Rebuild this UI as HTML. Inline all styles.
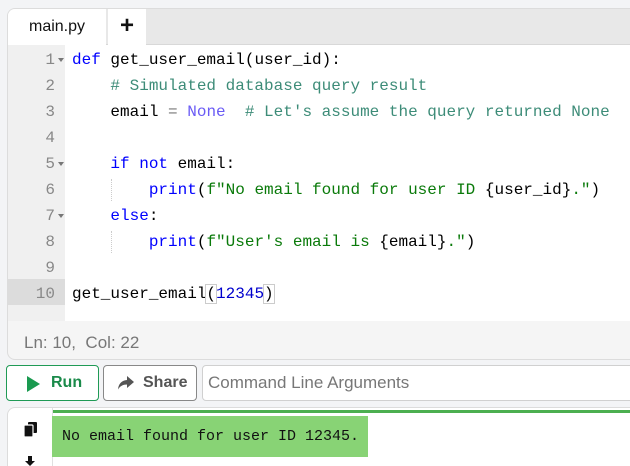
<!DOCTYPE html>
<html><head><meta charset="utf-8"><style>
*{margin:0;padding:0;box-sizing:border-box}
html,body{width:630px;height:466px;overflow:hidden}
body{background:#f3f4f6;font-family:"Liberation Sans",sans-serif;position:relative}
.panel{position:absolute;left:7px;top:8px;width:640px;height:352px;background:#f5f5f5;border:1px solid #dcdcdc;border-radius:8px;overflow:hidden}
.tabbar{position:absolute;left:0;top:0;right:0;height:36px;background:#e8e8e8;border-bottom:1px solid #d8d8d8}
.tab{position:absolute;top:0;height:36px;background:#fff;font-size:16px;color:#111;text-align:center;line-height:36px}
.editor{position:absolute;left:0;top:36px;right:0;height:276px;background:#fff}
.gutter{position:absolute;left:0;top:0;width:57px;height:276px;background:#f0f0f0}
.ln{position:absolute;left:0;width:47px;text-align:right;font:16px/26px "Liberation Mono",monospace;color:#888}
.fold{position:absolute;left:50px;width:0;height:0;border-left:3px solid transparent;border-right:3px solid transparent;border-top:4px solid #777}
.code{position:absolute;left:64px;font:16px/26px "Liberation Mono",monospace;color:#000;white-space:pre}
.k{color:#0000ff}.c{color:#3d8c78}.n{color:#6a5bf5}.s{color:#0a7a0a}.num{color:#0000cd}
.status{position:absolute;left:16px;top:324px;font-size:17px;color:#777}
.btn{position:absolute;top:365px;height:36px;border-radius:4px;background:#fff;font-weight:bold;font-size:16px;line-height:34px}
.out{position:absolute;left:7px;top:407px;width:640px;height:70px;background:#fff;border:1px solid #dcdcdc;border-radius:8px}
</style></head><body>
<div class="panel">
 <div class="tabbar">
  <div class="tab" style="left:0;width:98px">main.py</div>
  <div class="tab" style="left:100px;width:38px;font-size:24px;font-weight:bold;line-height:34px">+</div>
 </div>
 <div class="editor">
  <div class="gutter">
   <div style="position:absolute;left:0;top:234px;width:57px;height:26px;background:#dcdcdc"></div>
  </div>
  <div class="ln" style="top:2px">1</div><div class="fold" style="top:13px"></div>
  <div class="ln" style="top:28px">2</div>
  <div class="ln" style="top:54px">3</div>
  <div class="ln" style="top:80px">4</div>
  <div class="ln" style="top:106px">5</div><div class="fold" style="top:117px"></div>
  <div class="ln" style="top:132px">6</div>
  <div class="ln" style="top:158px">7</div><div class="fold" style="top:169px"></div>
  <div class="ln" style="top:184px">8</div>
  <div class="ln" style="top:210px">9</div>
  <div class="ln" style="top:236px">10</div>
  <div style="position:absolute;left:103px;top:134px;height:22px;border-left:1px dotted #ccc"></div>
  <div style="position:absolute;left:103px;top:186px;height:22px;border-left:1px dotted #ccc"></div>
  <div class="code" style="top:2px"><span class="k">def</span> get_user_email(user_id):
    <span class="c"># Simulated database query result</span>
    email <span style="color:#777">=</span> <span class="n">None</span>  <span class="c"># Let's assume the query returned None</span>

    <span class="k">if not</span> email:
        <span class="k">print</span>(<span class="s">f"No email found for user ID </span>{user_id}<span class="s">."</span>)
    <span class="k">else</span>:
        <span class="k">print</span>(<span class="s">f"User's email is </span>{email}<span class="s">."</span>)

get_user_email<span style="outline:1px solid #ccc">(</span><span class="num">12345</span><span style="outline:1px solid #ccc">)</span><span style="border-left:1px solid #333"></span></div>
 </div>
 <div class="status">Ln: 10,&nbsp; Col: 22</div>
</div>
<div class="btn" style="left:6px;width:93px;border:1px solid #1f9a55;color:#1a8a4a"><span style="position:absolute;left:20px;top:10px;width:0;height:0;border-top:8px solid transparent;border-bottom:8px solid transparent;border-left:13px solid #1a9a50"></span><span style="position:absolute;left:44px">Run</span></div>
<div class="btn" style="left:103px;width:94px;border:1px solid #888;color:#555">
 <svg style="position:absolute;left:14px;top:10px" width="16" height="14" viewBox="0 0 16 14"><path d="M9 0 L16 6 L9 12 V8.5 C5 8.5 2 10 0 13.5 C0.5 8 3.5 4.5 9 4 Z" fill="#555"/></svg>
 <span style="position:absolute;left:39px">Share</span></div>
<div style="position:absolute;left:202px;top:365px;width:440px;height:36px;background:#fff;border:1px solid #d0d0d0;border-radius:4px;font-size:17px;color:#777;line-height:34px;padding-left:5px">Command Line Arguments</div>
<div class="out">
 <div style="position:absolute;left:44px;top:2px;right:0;height:3px;background:#4caf50"></div>
 <div style="position:absolute;left:44px;top:0;height:70px;border-left:1px solid #e0e0e0"></div>
 <svg style="position:absolute;left:16px;top:14px" width="13" height="15" viewBox="0 0 13 15"><rect x="4" y="0" width="9" height="11" rx="1" fill="#111"/><rect x="0" y="3" width="9" height="12" rx="1" fill="#111" stroke="#fff" stroke-width="1.2"/></svg>
 <svg style="position:absolute;left:17px;top:48px" width="10" height="12" viewBox="0 0 10 12"><path d="M3 0h4v5h3l-5 5-5-5h3z" fill="#111"/></svg>
 <div style="position:absolute;left:44px;top:8px;width:316px;height:41px;background:#88d375;font:15px/41px 'Liberation Mono',monospace;color:#111;padding-left:10px">No email found for user ID 12345.</div>
</div>
</body></html>
